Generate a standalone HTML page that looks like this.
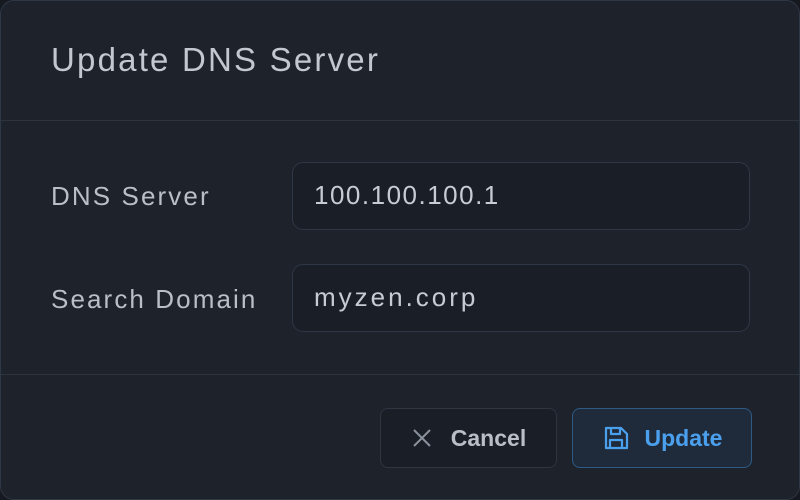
<!DOCTYPE html>
<html><head><style>
html,body{margin:0;padding:0;width:800px;height:500px;background:#16191f;overflow:hidden;font-family:"Liberation Sans",sans-serif}
.d{position:absolute;left:0;top:0;width:798px;height:498px;border:1px solid #2f3845;border-radius:14px;background:#1d222b}
.t{position:absolute;left:50px;top:40px;font-size:33px;color:#c3c8d0;letter-spacing:2.2px}
.hr{position:absolute;left:0;width:798px;height:1px;background:#2c3440}
.l{position:absolute;left:50px;font-size:26px;color:#b9bec7;letter-spacing:2.1px}
.i{position:absolute;left:291px;width:458px;height:68px;border:1.5px solid #2e3745;border-radius:11px;background:#1a1f27;box-sizing:border-box;font-size:26px;color:#c7ccd4;padding-left:21px;line-height:65px;letter-spacing:1.5px}
.b{position:absolute;top:407px;height:60px;border-radius:8px;box-sizing:border-box;font-size:23px;font-weight:bold;display:flex;align-items:center;justify-content:center}
</style></head><body>
<div class="d">
<div class="t">Update DNS Server</div>
<div class="hr" style="top:119px"></div>
<div class="l" style="top:180px">DNS Server</div>
<div class="i" style="top:161px">100.100.100.1</div>
<div class="l" style="top:283px">Search Domain</div>
<div class="i" style="top:263px;letter-spacing:3px">myzen.corp</div>
<div class="hr" style="top:373px"></div>
<div class="b" style="left:379px;width:177px;border:1.5px solid #2e3642;background:#1a1e26;color:#b9bec7">
<svg width="22" height="22" viewBox="0 0 22 22" style="margin-right:18px"><path d="M3 3L19 19M19 3L3 19" stroke="#8a919c" stroke-width="2" fill="none"/></svg>Cancel</div>
<div class="b" style="left:571px;width:180px;border:1.5px solid #2f5a85;background:#1f2b3b;color:#4ba0ee">
<svg width="28" height="28" viewBox="0 0 28 28" style="margin-right:15px"><g fill="none" stroke="#4ba0ee" stroke-width="2.2" stroke-linejoin="round"><path d="M4 4H19L25 10V24H4Z"/><path d="M9 4V10H18V4"/><path d="M8 24V16H20V24"/></g></svg>Update</div>
</div>
</body></html>
